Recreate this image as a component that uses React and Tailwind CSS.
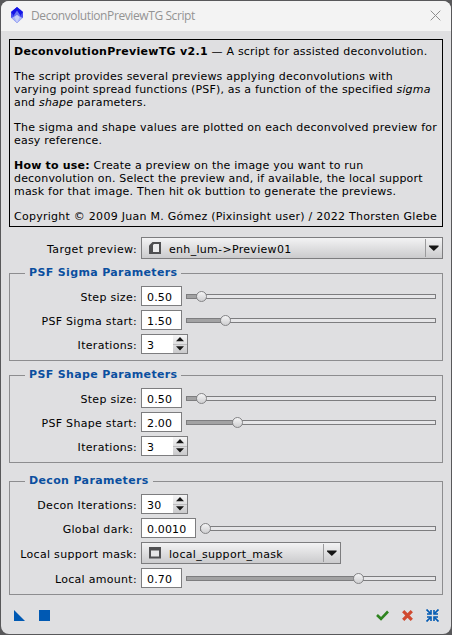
import React from "react";

function Slider({ value, className = "" }) {
  return (
    <div className={"relative h-[5px] border border-[#7d7d7f] bg-[#e6e6e8] " + className}>
      <div className="h-[3px] bg-[#a2a2a3]" style={{ width: value + "px" }} />
      <div
        className="absolute -top-[4px] h-[11px] w-[11px] rounded-full border border-[#848486] bg-linear-to-b from-[#f4f4f5] to-[#cfcfd1]"
        style={{ left: value - 5 + "px" }}
      />
    </div>
  );
}

function Label({ children, pad = "pt-[5px]" }) {
  return (
    <div className={"flex w-[127px] shrink-0 justify-end whitespace-pre leading-[13px] " + pad}>
      <span>{children}</span>
    </div>
  );
}

function Field({ children, className = "w-[41px]" }) {
  return (
    <div className={"h-5 shrink-0 border border-[#7d7d7f] bg-white pl-[5px] pt-[4px] leading-[13px] tracking-[0.15px] " + className}>
      {children}
    </div>
  );
}

function Spin({ children }) {
  return (
    <div className="flex h-5 w-[47px] border border-[#7d7d7f] bg-white">
      <div className="w-[31px] pl-[5px] pt-[4px] leading-[13px] tracking-[0.15px]">{children}</div>
      <div className="flex w-[14px] flex-col bg-linear-to-b from-[#f5f5f6] to-[#c9c9cb]">
        <svg width="14" height="18" viewBox="0 0 14 18">
          <path d="M0 9.5H14" stroke="#bdbdbf" />
          <path d="M3 6.2L7 2L11 6.2ZM3 11.3H11L7 15.5Z" fill="#151515" />
        </svg>
      </div>
    </div>
  );
}

function Combo({ icon, children, className }) {
  return (
    <div
      className={
        "flex h-[22px] items-center border border-[#7d7d7f] bg-linear-to-b from-[#f3f3f4] to-[#cbcbcd] " + className
      }
    >
      <div className="ml-[7px] w-[12px]">{icon}</div>
      <div className="ml-[8px] flex-1 pt-[2px] leading-[13px] tracking-[0.31px]">{children}</div>
      <div className="flex h-[18px] w-[17px] items-center border-l border-[#9a9a9c]">
        <svg width="16" height="18" viewBox="0 0 16 18">
          <path d="M3 6.5H12.6V7.5L7.8 12L3 7.5Z" fill="#151515" />
        </svg>
      </div>
    </div>
  );
}

function Group({ title, titleClass, className, children }) {
  return (
    <section className={"ml-[9px] w-[434px] border border-[#8d8d8f] " + className}>
      <div className="-mt-[8px] ml-[15px] flex h-5">
        <h2 className={"h-[14px] whitespace-nowrap bg-[#dfdfe1] pl-[4px] font-bold leading-[14px] tracking-[0.36px] text-[#0b4f9f] " + titleClass}>
          {title}
        </h2>
      </div>
      {children}
    </section>
  );
}

function Row({ label, pad, labelClass = "tracking-[0.3px]", children, className = "mb-1 h-5" }) {
  return (
    <div className={"flex " + className}>
      <Label pad={pad}>
        <span className={labelClass}>{label}</span>
      </Label>
      <div className="ml-[4px] flex">{children}</div>
    </div>
  );
}

function PreviewIcon() {
  return (
    <svg className="block" width="12" height="12" viewBox="0 0 12 12">
      <path d="M3.5 0H12V12H0V3.5Z" fill="#505052" />
      <path d="M5 2H10V10H4V3Z" fill="#eeeeef" />
    </svg>
  );
}

function ImageIcon() {
  return (
    <svg className="block" width="12" height="12" viewBox="0 0 12 12">
      <path d="M0 0H12V11.5H0Z" fill="#505052" />
      <path d="M2 3.5H10V9.5H2Z" fill="#e7e7e8" />
    </svg>
  );
}

export default function App() {
  return (
    <div className="h-[635px] w-[452px] overflow-hidden bg-[#58585a] pl-px pt-px font-['DejaVu_Sans','Liberation_Sans',sans-serif] text-[11px] text-black">
      <div className="flex h-[633px] w-[450px] flex-col overflow-hidden rounded-[8px] bg-[#dfdfe1]">
        <header className="flex h-[30px] shrink-0 items-center bg-[#f3f3f3]">
          <svg className="-mt-[2px] ml-[10px]" width="12" height="16" viewBox="0 0 12 16">
            <path d="M6 0L12 5V10.5L6 16L0 10.5V5Z" fill="#4a50ee" />
            <path d="M6 0L12 5L9 9L6 5L3 9L0 5Z" fill="#1414e6" />
            <path d="M6 3.5L9 8L6 16L3 8Z" fill="#6a78f0" />
            <path d="M0.5 11L6 8L11.5 11L6 16Z" fill="#a9b4f4" />
            <path d="M3.5 10L6 8L8.500 10L6 16Z" fill="#c8d0f8" />
          </svg>
          <div className="ml-[8px] flex-1 whitespace-nowrap font-['Open_Sans','Noto_Sans',sans-serif] text-[12px] tracking-[-0.4px] text-[#939393]">
            DeconvolutionPreviewTG Script
          </div>
          <svg className="-mt-[1px] mr-[10px]" width="11" height="11" viewBox="0 0 11 11">
            <path d="M0.7 0.7L10.3 10.3M10.3 0.7L0.7 10.3" stroke="#8e8e8e" fill="none" />
          </svg>
        </header>

        <div className="-ml-px flex flex-col">
          <div className="ml-[9px] mt-[8px] flex h-[188px] w-[434px] flex-col gap-3 whitespace-nowrap border border-black pl-[4px] pt-[5px] leading-[13px] tracking-[0.2px]">
            <p>
              <b className="tracking-[0.3px]">DeconvolutionPreviewTG v2.1</b> — A script for assisted deconvolution.
            </p>
            <p>
              The script provides several previews applying deconvolutions with
              <br />
              <span className="tracking-[0.18px]">
                varying point spread functions (PSF), as a function of the specified <i>sigma</i>
              </span>
              <br />
              and <i>shape</i> parameters.
            </p>
            <p>
              <span className="tracking-[0.22px]">
                The sigma and shape values are plotted on each deconvolved preview for
              </span>
              <br />
              easy reference.
            </p>
            <p>
              <b>How to use:</b> Create a preview on the image you want to run
              <br />
              <span className="tracking-[0.18px]">
                deconvolution on. Select the preview and, if available, the local support
              </span>
              <br />
              mask for that image. Then hit ok buttion to generate the previews.
            </p>
            <p className="tracking-[0.26px]">
              Copyright © 2009 Juan M. Gómez (Pixinsight user) / 2022 Thorsten Glebe
            </p>
          </div>

          <div className="mt-[10px] flex h-[22px] pl-[10px]">
            <Label pad="pt-[6px]">
              <span className="tracking-[0.4px]">Target preview:</span>
            </Label>
            <Combo className="ml-[4px] w-[302px]" icon={<PreviewIcon />}>
              enh_lum-&gt;Preview01
            </Combo>
          </div>

          <Group title="PSF Sigma Parameters" titleClass="w-[156px]" className="mt-[14px] h-[88px]">
            <Row label="Step size:">
              <Field>0.50</Field>
              <Slider value={14} className="ml-[4px] mt-[8px] w-[250px]" />
            </Row>
            <Row label="PSF Sigma start:">
              <Field>1.50</Field>
              <Slider value={38} className="ml-[4px] mt-[8px] w-[250px]" />
            </Row>
            <Row label="Iterations:">
              <Spin>3</Spin>
            </Row>
          </Group>

          <Group title="PSF Shape Parameters" titleClass="w-[156px]" className="mt-[14px] h-[88px]">
            <Row label="Step size:">
              <Field>0.50</Field>
              <Slider value={14} className="ml-[4px] mt-[8px] w-[250px]" />
            </Row>
            <Row label="PSF Shape start:">
              <Field>2.00</Field>
              <Slider value={50} className="ml-[4px] mt-[8px] w-[250px]" />
            </Row>
            <Row label="Iterations:">
              <Spin>3</Spin>
            </Row>
          </Group>

          <Group title="Decon Parameters" titleClass="w-[128px]" className="mt-[18px] h-[114px]">
            <Row label="Decon Iterations:">
              <Spin>30</Spin>
            </Row>
            <Row label="Global dark: ">
              <Field className="w-[55px]">0.0010</Field>
              <Slider value={4} className="ml-[4px] mt-[8px] w-[236px]" />
            </Row>
            <Row label="Local support mask:" className="mb-1 h-[22px]" pad="pt-[6px]">
              <Combo className="w-[200px]" icon={<ImageIcon />}>
                local_support_mask
              </Combo>
            </Row>
            <Row label="Local amount:">
              <Field>0.70</Field>
              <Slider value={171} className="ml-[4px] mt-[8px] w-[250px]" />
            </Row>
          </Group>

          <footer className="mt-[14px] flex h-[13px] items-center pl-[14px]">
            <svg width="11" height="11" viewBox="0 0 11 11">
              <path d="M0 0L11 11H0Z" fill="#0059b3" />
            </svg>
            <div className="ml-[14px] h-[11px] w-[11px] bg-[#0059b3]" />
            <svg className="ml-[326px]" width="13" height="11" viewBox="0 0 13 11">
              <path d="M1 5L5 8.8L12 1.5" fill="none" stroke="#2f8420" strokeWidth="2.6" />
            </svg>
            <svg className="ml-[13px]" width="11" height="11" viewBox="0 0 11 11">
              <path d="M1.2 1.2L9.8 9.8M9.8 1.2L1.2 9.8" stroke="#d04a30" strokeWidth="3.2" />
            </svg>
            <svg className="ml-[13px]" width="13" height="13" viewBox="0 0 13 13">
              <path
                d="M0.5 0.5L4.5 4.5M12.5 0.5L8.5 4.5M0.5 12.5L4.5 8.5M12.5 12.5L8.5 8.5"
                stroke="#0059b3"
                strokeWidth="1.7"
              />
              <path d="M1 5H5V1M12 5H8V1M1 8H5V12M12 8H8V12" fill="none" stroke="#0059b3" strokeWidth="1.6" />
            </svg>
          </footer>
        </div>
      </div>
    </div>
  );
}
